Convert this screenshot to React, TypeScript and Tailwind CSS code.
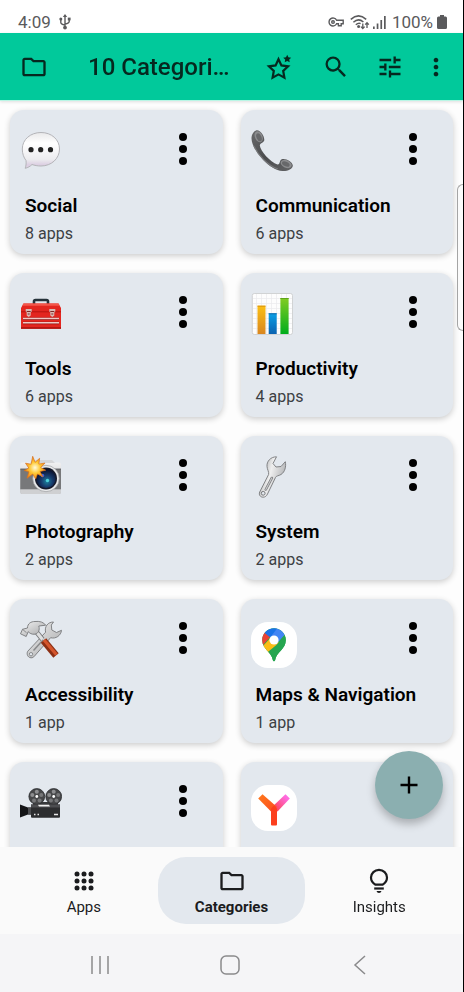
import type { ReactNode } from "react";
import { MdMoreVert, MdOutlineFolder, MdSearch, MdTune } from "react-icons/md";

type Category = {
  name: string;
  apps: number;
  icon: ReactNode;
};

const CATEGORIES: Category[] = [
  { name: "Social", apps: 8, icon: <SpeechIcon /> },
  { name: "Communication", apps: 6, icon: <PhoneIcon /> },
  { name: "Tools", apps: 6, icon: <ToolboxIcon /> },
  { name: "Productivity", apps: 4, icon: <ChartIcon /> },
  { name: "Photography", apps: 2, icon: <CameraIcon /> },
  { name: "System", apps: 2, icon: <WrenchIcon /> },
  { name: "Accessibility", apps: 1, icon: <HammerWrenchIcon /> },
  { name: "Maps & Navigation", apps: 1, icon: <MapsIcon /> },
  { name: "Video", apps: 1, icon: <ProjectorIcon /> },
  { name: "Browser", apps: 1, icon: <YandexIcon /> },
];

export default function App() {
  return (
    <div className="flex h-screen flex-col border-r border-black bg-white font-['Roboto',sans-serif] text-black">
      <StatusBar />
      <Header />

      <div className="relative flex min-h-0 flex-1 flex-col">
        <main className="grid min-h-0 flex-1 auto-rows-max grid-cols-2 gap-x-[18px] gap-y-[19px] overflow-y-auto bg-[#fdfdfd] px-[10px] pt-[9px] pb-6 [scrollbar-width:none]">
          {CATEGORIES.map((c) => (
            <CategoryCard key={c.name} category={c} />
          ))}
        </main>

        {/* edge panel handle */}
        <div className="absolute top-[83px] right-0 h-[147px] w-[6px] rounded-l-md border border-r-0 border-[#a5a5a5] bg-[#fbfbfb]" />

        <button
          aria-label="Add category"
          className="absolute right-5 bottom-7 flex size-[68px] items-center justify-center rounded-full bg-[#8bafb0] shadow-[0_5px_8px_rgba(0,0,0,0.25)]"
        >
          <svg viewBox="0 0 18 18" className="size-[18px]" stroke="#000" strokeWidth="2.4">
            <path d="M9 0.5v17M0.5 9h17" />
          </svg>
        </button>
      </div>

      <BottomNav />
      <SystemNav />
    </div>
  );
}

function StatusBar() {
  return (
    <div className="flex h-[33px] items-end justify-between bg-white pr-4 pl-[18px] text-[17px] leading-[22px] text-[#5a5a5c]">
      <div className="flex items-center gap-2">
        <span>4:09</span>
        <svg viewBox="0 0 12 16" className="h-4 w-3" fill="none" stroke="#5a5a5c" strokeWidth="1.4">
          <path d="M6 2v11M1.8 6v2.4Q1.8 10 6 11M10.2 6v1.6Q10.2 9.4 6 10" />
          <path d="M6 0l2.2 3H3.8z" fill="#5a5a5c" stroke="none" />
          <circle cx="1.8" cy="5" r="1.5" fill="#5a5a5c" stroke="none" />
          <path d="M8.8 3.6h2.8v2.8H8.8z" fill="#5a5a5c" stroke="none" />
          <circle cx="6" cy="13.6" r="1.9" fill="#5a5a5c" stroke="none" />
        </svg>
      </div>
      <div className="flex items-center">
        <svg viewBox="0 0 16 12" className="mr-[6px] h-3 w-4" fill="none" stroke="#5a5a5c" strokeWidth="1.4">
          <path d="M8.6 4.2A4 4 0 1 0 8.6 7.8H10.4V9.8H13.2V7.8H15.2V4.2z" />
          <circle cx="5" cy="6" r="1.3" />
        </svg>
        <svg viewBox="0 0 20 16" className="mr-[3px] h-4 w-5" fill="none" stroke="#5a5a5c" strokeWidth="1.5">
          <path d="M0.8 5.4Q8.5 -1.6 16.2 5.4M3.4 8.2Q8.5 3.6 13.4 8M5.8 10.8Q8.5 8.4 10.6 9.6" />
          <circle cx="8.6" cy="12.6" r="1.5" fill="#5a5a5c" stroke="none" />
          <path d="M12.8 9.4v5M11 12.6l1.8 2 1.8-2M17 14V8.6M15.2 10.6l1.8-2 1.8 2" strokeWidth="1.3" />
        </svg>
        <svg viewBox="0 0 13 13" className="mr-[6px] size-[13px]" fill="#5a5a5c">
          <path d="M0 10.5h1.7V13H0zM3.7 7.5h1.7V13H3.7zM7.4 4h1.7v9H7.4zM11 0h1.7v13H11z" />
        </svg>
        <span className="mr-1">100%</span>
        <svg viewBox="0 0 10 14" className="h-[14px] w-[10px]" fill="#5a5a5c">
          <path d="M3 0h4v1.5h1.6Q10 1.5 10 3v9.5Q10 14 8.5 14h-7Q0 14 0 12.500V3Q0 1.500 1.500 1.500H3z" />
        </svg>
      </div>
    </div>
  );
}

function Header() {
  return (
    <header className="z-10 flex h-[68px] items-center border-b border-[#b9f6e5] bg-[#01c99b] pr-[13px] pl-5 text-[#06281f] shadow-[0_1px_3px_rgba(0,0,0,0.12)]">
      <button aria-label="Folders" className="shrink-0">
        <MdOutlineFolder size={28} />
      </button>
      <h1 className="ml-10 min-w-0 flex-1 truncate text-2xl font-medium">10 Categories</h1>
      <button aria-label="Favourites" className="ml-[31px] shrink-0">
        <svg viewBox="0 0 28 28" className="size-7">
          <path
            d="M12.500 6.200l2.900 6.200 6.700 0.900-4.900 4.700 1.200 6.700-5.900-3.300-5.900 3.300 1.200-6.700-4.900-4.700 6.700-0.900z"
            fill="none"
            stroke="currentColor"
            strokeWidth="2.200"
          />
          <path
            d="M21.200 1.800l1.200 2.500 2.800 0.400-2 1.900 0.500 2.700-2.500-1.300-2.500 1.300 0.500-2.700-2-1.900 2.800-0.400z"
            fill="currentColor"
          />
        </svg>
      </button>
      <button aria-label="Search" className="ml-[28px] shrink-0">
        <MdSearch size={28} />
      </button>
      <button aria-label="Filter" className="ml-[26px] shrink-0">
        <MdTune size={28} />
      </button>
      <button aria-label="More options" className="ml-[18px] shrink-0">
        <MdMoreVert size={28} />
      </button>
    </header>
  );
}

function CategoryCard({ category }: { category: Category }) {
  const { name, apps, icon } = category;
  return (
    <section className="rounded-[14px] bg-[#e3e8ee] pt-5 pb-2 shadow-[0_2px_6px_rgba(0,0,0,0.2)]">
      <div className="flex h-16 items-start justify-between pr-7 pl-[10px]">
        {icon}
        <button aria-label={`${name} options`} className="flex h-[38px] w-6 items-center justify-center">
          <svg viewBox="0 0 8 32" className="h-8 w-2">
            <circle cx="4" cy="4" r="4" />
            <circle cx="4" cy="16" r="4" />
            <circle cx="4" cy="28" r="4" />
          </svg>
        </button>
      </div>
      <div className="flex flex-col gap-1 px-[15px]">
        <h2 className="truncate text-[19px] leading-6 font-semibold">{name}</h2>
        <p className="text-base leading-6 text-[#3c4043]">
          {apps} {apps === 1 ? "app" : "apps"}
        </p>
      </div>
    </section>
  );
}

function BottomNav() {
  return (
    <nav className="z-10 flex bg-[#fafafa] p-[10px] text-[#1b1c1e]">
      <NavItem label="Apps">
        <svg viewBox="0 0 28 28" className="size-7" fill="currentColor">
          {[7, 14, 21].map((y) => [7, 14, 21].map((x) => <circle key={`${x}-${y}`} cx={x} cy={y} r="2.500" />))}
        </svg>
      </NavItem>
      <NavItem label="Categories" active>
        <MdOutlineFolder size={28} />
      </NavItem>
      <NavItem label="Insights">
        <svg viewBox="0 0 28 28" className="size-7" fill="none" stroke="currentColor" strokeWidth="2.200">
          <path d="M10.500 17.700C7.800 16.300 6 13.700 6 10.600 6 6.200 9.600 2.900 14 2.900S22 6.200 22 10.600C22 13.700 20.200 16.300 17.500 17.700z" />
          <path d="M9.200 21.500h9.600" />
          <path d="M11.500 24h5Q16 26 14 26T11.500 24z" fill="currentColor" stroke="none" />
        </svg>
      </NavItem>
    </nav>
  );
}

function NavItem({ label, active, children }: { label: string; active?: boolean; children: ReactNode }) {
  return (
    <button
      className={`flex flex-1 basis-0 flex-col items-center gap-[2px] rounded-[28px] pt-[10px] pb-[7px] text-[15px] leading-5 ${active ? "bg-[#e3e8ee] font-bold" : ""}`}
    >
      {children}
      <span>{label}</span>
    </button>
  );
}

function SystemNav() {
  return (
    <div className="flex h-[58px] items-center bg-[#f5f5f7] pt-1 pr-[38px] pl-[35px]">
      <button aria-label="Recents" className="flex flex-1 justify-center">
        <svg viewBox="0 0 20 20" className="size-5" stroke="#8a8a8c" strokeWidth="1.500">
          <path d="M2 1v18M10 1v18M18 1v18" />
        </svg>
      </button>
      <button aria-label="Home" className="flex flex-1 justify-center">
        <svg viewBox="0 0 20 20" className="size-5" fill="none" stroke="#8a8a8c" strokeWidth="1.500">
          <rect x="1" y="1" width="18" height="18" rx="5" />
        </svg>
      </button>
      <button aria-label="Back" className="flex flex-1 justify-center">
        <svg viewBox="0 0 20 20" className="size-5" fill="none" stroke="#8a8a8c" strokeWidth="1.500">
          <path d="M15 1L5 10l10 9" />
        </svg>
      </button>
    </div>
  );
}

function SpeechIcon() {
  return (
    <svg viewBox="0 0 42 42" className="size-[42px]">
      <defs>
        <linearGradient id="speech" x1="0" y1="0" x2="0" y2="1">
          <stop offset="0" stopColor="#e9e9ea" />
          <stop offset="0.3" stopColor="#fff" />
          <stop offset="0.75" stopColor="#ececef" />
          <stop offset="0.9" stopColor="#dccfe2" />
        </linearGradient>
      </defs>
      <path
        d="M21 2.500C31.500 2.500 39.500 9.500 39.500 19S31.500 36 21 36C17.500 36 14.500 35.400 12 34.500 10 36.500 8 37.600 5.200 38.300 6.200 35.500 6.300 32.500 6 30.500 3.700 27.500 2.300 23.500 2.300 19 2.300 9.500 10.500 2.500 21 2.500z"
        fill="url(#speech)"
        stroke="#b4b4b8"
        strokeWidth="1"
      />
      <circle cx="11" cy="19.700" r="2.600" fill="#222" />
      <circle cx="20.700" cy="19.700" r="2.600" fill="#222" />
      <circle cx="30.500" cy="19.700" r="2.600" fill="#222" />
    </svg>
  );
}

function PhoneIcon() {
  return (
    <svg viewBox="0 0 42 42" className="size-[42px]">
      <defs>
        <linearGradient id="handset" x1="0" y1="0" x2="1" y2="1">
          <stop offset="0" stopColor="#6a6b6d" />
          <stop offset="0.5" stopColor="#4b4c4e" />
          <stop offset="1" stopColor="#636466" />
        </linearGradient>
      </defs>
      <path
        d="M0.500 8.500C0.500 4 3.200 0.200 6.200 0.200 9.500 0.200 13.500 6 13.300 10 13.100 12.800 9.300 12.500 8.800 15.500 9.500 21 19 32 26.500 34.500 29.500 34.800 28 30.500 30.800 29.300 34.500 27.900 41.500 32 41.800 35.300 42 39 36.500 41.300 31.500 41 25 40.800 18 36 12 29.500 5.500 22.500 0.500 14.500 0.500 8.500z"
        fill="url(#handset)"
      />
      <ellipse cx="7.700" cy="6.700" rx="3.800" ry="5.800" transform="rotate(-24 7.700 6.700)" fill="#8b8c8e" />
      <ellipse cx="8" cy="7.300" rx="2.400" ry="4.200" transform="rotate(-24 8 7.300)" fill="#67686a" />
      <ellipse cx="35.200" cy="34" rx="5.800" ry="3.700" transform="rotate(24 35.200 34)" fill="#8b8c8e" />
      <ellipse cx="34.800" cy="34" rx="4" ry="2.300" transform="rotate(24 34.800 34)" fill="#67686a" />
      <path d="M3 16C7 25 17 36 27 39" fill="none" stroke="#77787a" strokeWidth="1.200" />
    </svg>
  );
}

function ToolboxIcon() {
  return (
    <svg viewBox="0 0 42 42" className="size-[42px]">
      <path d="M14 12V8.500Q14 7 15.500 7h11Q28 7 28 8.500V12" fill="none" stroke="#26323a" strokeWidth="2.600" />
      <path d="M3.500 10.500h35L41 15v20.700H1V15z" fill="#e3261f" />
      <path d="M3.500 10.500h35l1.300 2.300H2.200z" fill="#f4574b" />
      <path d="M1 18.800h40" stroke="#b5140f" strokeWidth="1" />
      <path d="M1 35h40" stroke="#a8120e" strokeWidth="1.400" />
      <path d="M3 25.800h36M3 30h36" stroke="#8f1512" strokeWidth="2.400" />
      <path d="M3 25.500h36M3 29.700h36" stroke="#f0c9c5" strokeWidth="1.400" />
      {[8.700, 32.300].map((x) => (
        <g key={x} transform={`translate(${x} 15)`}>
          <path d="M-3 1h6v2.600l-1 1v3L0 9l-2-1.400v-3l-1-1z" fill="#d8b9b4" />
          <path d="M-2 3.500h4M-1 6h2" stroke="#7d2a26" strokeWidth="1" />
        </g>
      ))}
    </svg>
  );
}

function ChartIcon() {
  return (
    <svg viewBox="0 0 42 42" className="size-[42px]">
      <defs>
        <linearGradient id="barOrange" x1="0" y1="0" x2="0" y2="1">
          <stop offset="0" stopColor="#fbbf14" />
          <stop offset="1" stopColor="#d9861f" />
        </linearGradient>
        <linearGradient id="barBlue" x1="0" y1="0" x2="0" y2="1">
          <stop offset="0" stopColor="#0aa0e6" />
          <stop offset="1" stopColor="#0b62b0" />
        </linearGradient>
        <linearGradient id="barGreen" x1="0" y1="0" x2="0" y2="1">
          <stop offset="0" stopColor="#82cc23" />
          <stop offset="1" stopColor="#00ad1d" />
        </linearGradient>
      </defs>
      <rect x="1.300" y="0.500" width="40.200" height="41" rx="2" fill="#fdfdfd" stroke="#c9cacc" strokeWidth="0.800" />
      <path
        d="M2 5.500h39M2 10.500h39M2 15.500h39M2 20.500h39M2 25.500h39M2 30.500h39M2 35.500h39M5.500 1v40M10.500 1v40M15.500 1v40M20.500 1v40M25.500 1v40M30.500 1v40M35.500 1v40"
        stroke="#e9eaec"
        strokeWidth="0.700"
      />
      <rect x="6.500" y="12.700" width="8" height="28.300" fill="url(#barOrange)" />
      <rect x="17.700" y="20.300" width="8" height="20.700" fill="url(#barBlue)" />
      <rect x="29.400" y="5" width="8.200" height="36" fill="url(#barGreen)" />
      <path d="M6.500 13.200h8" stroke="#d9920c" />
      <path d="M17.700 20.800h8" stroke="#1269a8" />
      <path d="M29.400 5.500h8.200" stroke="#5fa31a" />
    </svg>
  );
}

function CameraIcon() {
  return (
    <svg viewBox="0 0 42 42" className="size-[42px]">
      <defs>
        <linearGradient id="cameraTop" x1="0" y1="0" x2="0" y2="1">
          <stop offset="0" stopColor="#f1f1f2" />
          <stop offset="1" stopColor="#b3b4b6" />
        </linearGradient>
        <radialGradient id="cameraLens" cx="0.55" cy="0.65" r="0.6">
          <stop offset="0" stopColor="#1d83a0" />
          <stop offset="0.5" stopColor="#173a6b" />
          <stop offset="1" stopColor="#0a1230" />
        </radialGradient>
        <radialGradient id="cameraFlash">
          <stop offset="0" stopColor="#fffbe0" />
          <stop offset="0.5" stopColor="#ffc933" />
          <stop offset="1" stopColor="#f0891d" />
        </radialGradient>
      </defs>
      <rect x="0.300" y="6.500" width="40.700" height="31.500" rx="2" fill="url(#cameraTop)" />
      <path d="M10 7l3-3h19l3 3z" fill="#d5d6d8" />
      <path d="M0.300 13h40.700v20.500H0.300z" fill="#77787a" />
      <path d="M0.300 13h40.700" stroke="#55575a" strokeWidth="0.800" />
      <path d="M0.300 33.500h40.700V36q0 2-2 2H2.300q-2 0-2-2z" fill="#cfd0d2" />
      <circle cx="26" cy="22.500" r="13.200" fill="#e8e9ea" stroke="#9c9da0" strokeWidth="0.700" />
      <circle cx="26" cy="22.500" r="11" fill="#161a2b" />
      <circle cx="26" cy="22.500" r="9.600" fill="url(#cameraLens)" />
      <circle cx="22.500" cy="19.500" r="1.700" fill="#4a63d8" />
      <circle cx="27.500" cy="24.500" r="1.700" fill="#4fd0d8" />
      <path
        d="M12.700 0.300l2.400 6 4.500-4-0.800 5.700 6.200-0.900-4.300 4.400 5 2.700-5.700 1.300 2.800 5.300-5.300-2.800-1.900 5-2.800-5-5.800 4.200 1.900-6.400-4.600-1.300 4.500-2.500-3.300-4.800 5.600 1z"
        fill="url(#cameraFlash)"
        stroke="#d9701a"
        strokeWidth="0.700"
      />
    </svg>
  );
}

function WrenchIcon() {
  return (
    <svg viewBox="0 0 42 42" className="size-[42px]">
      <defs>
        <linearGradient id="wrench" x1="0" y1="0" x2="1" y2="0.4">
          <stop offset="0" stopColor="#8d8e90" />
          <stop offset="0.5" stopColor="#efefef" />
          <stop offset="1" stopColor="#b3b4b6" />
        </linearGradient>
      </defs>
      <path
        d="M25.500 0.800C19.500 0.800 15.500 5.500 16 10.500 16.200 13.500 18.200 16 17.600 18.500L8.700 36C7.500 39 9.500 41.200 12 41.200 14.200 41.200 15.600 40 16.500 38L24.500 21.500C25.500 19.500 27.500 20 30 18.500 34 16 35.300 10.500 34.300 5.700L30 10.500 25 11 22 7.500z"
        fill="url(#wrench)"
        stroke="#77787a"
        strokeWidth="0.900"
        strokeLinejoin="round"
      />
      <path d="M20.800 22L14.800 33.500" stroke="#77787a" strokeWidth="2.600" strokeLinecap="round" />
      <path d="M20.800 22L14.800 33.500" stroke="#c6c7c9" strokeWidth="1.200" strokeLinecap="round" />
      <circle cx="12.200" cy="37.300" r="1.900" fill="#e3e8ee" stroke="#6d6e70" strokeWidth="0.900" />
    </svg>
  );
}

function HammerWrenchIcon() {
  return (
    <svg viewBox="0 0 42 42" className="size-[42px]">
      <defs>
        <linearGradient id="steel" x1="0" y1="0" x2="1" y2="1">
          <stop offset="0" stopColor="#f5f5f5" />
          <stop offset="1" stopColor="#a2a3a5" />
        </linearGradient>
      </defs>
      <path
        d="M33.500 3C28 3 24.300 7.500 25.600 13.200L7.800 32.200C6.300 34.500 7.400 38.500 11 38.800 12.600 38.900 13.500 38.200 14.400 37.200L30.600 18.700C35.800 20.200 41 16.500 41.500 11.300L36.500 13.500 31.800 11 31.300 6z"
        fill="url(#steel)"
        stroke="#77787a"
        strokeWidth="0.900"
        strokeLinejoin="round"
      />
      <path d="M23 21L13.500 31.500" stroke="#88898b" strokeWidth="1.500" />
      <circle cx="11" cy="35.200" r="1.700" fill="#e3e8ee" stroke="#77787a" strokeWidth="0.800" />
      <path d="M15 11L22.500 20.500" stroke="#77787a" strokeWidth="5" />
      <path d="M15 11L22.500 20.500" stroke="#dedfe0" strokeWidth="3.200" />
      <path
        d="M7.500 9C7.500 4.500 11 2.500 15 2.500 19.500 2 23.500 3 25.700 6.200L18.800 7C20 11 18.500 14.300 15 15.200 11.500 15.700 9.700 14 8.200 12.700L6.200 17.500 0.500 14.800 2.500 10.300z"
        fill="url(#steel)"
        stroke="#77787a"
        strokeWidth="0.900"
        strokeLinejoin="round"
      />
      <path d="M2.500 10.300L6.500 13.700" stroke="#77787a" strokeWidth="0.800" />
      <path d="M23.500 21.500L36 36.500" stroke="#8c2f14" strokeWidth="7" />
      <path d="M24 21L36.500 35.700" stroke="#d4552c" strokeWidth="3.200" />
    </svg>
  );
}

function ProjectorIcon() {
  return (
    <svg viewBox="0 0 42 42" className="size-[42px]">
      <path d="M13 20h25v3H13z" fill="#38393b" />
      {[16.800, 33.700].map((x) => (
        <g key={x} transform={`translate(${x} 14.500)`}>
          <circle r="7.900" fill="#47484a" stroke="#2a2b2d" strokeWidth="0.800" />
          <circle cx="0" cy="-4.700" r="2" fill="#8d8e90" />
          <circle cx="4.500" cy="-1.400" r="2" fill="#77787a" />
          <circle cx="2.800" cy="3.900" r="2" fill="#77787a" />
          <circle cx="-2.800" cy="3.900" r="2" fill="#77787a" />
          <circle cx="-4.500" cy="-1.400" r="2" fill="#8d8e90" />
          <circle r="1.400" fill="#fff" />
        </g>
      ))}
      <path d="M11 22.500h29v12.200q0 1-1 1H12q-1 0-1-1z" fill="#2c2d2f" />
      <path d="M11 22.500h29v3H11z" fill="#4c4d50" />
      <path d="M18 22.800h11l1 1.800H19z" fill="#f1f1f1" />
      <path d="M0 22.500l8 3h3v7H8l-8 3z" fill="#141517" />
      <path d="M8 25.500h3v7H8z" fill="#4c4d50" />
      <path d="M14 32.500h1.500M17.500 32.500H19M34 32.500h4" stroke="#e6e6e6" strokeWidth="1.300" />
    </svg>
  );
}

function AppTile({ children }: { children: ReactNode }) {
  return (
    <div className="mt-[3px] size-[46px] rounded-[17px] bg-white">
      <svg viewBox="0 0 46 46" className="size-full">
        {children}
      </svg>
    </div>
  );
}

function MapsIcon() {
  return (
    <AppTile>
      <defs>
        <clipPath id="pin">
          <path d="M23 6.300C29.600 6.300 34.800 11.500 34.800 18 34.800 27.500 25.500 29.500 24.100 38.300 23.800 39.500 22.200 39.500 21.900 38.300 20.500 29.500 11.200 27.500 11.200 18 11.200 11.500 16.400 6.300 23 6.300z" />
        </clipPath>
      </defs>
      <g clipPath="url(#pin)">
        <path d="M0 0h46v46H0z" fill="#26a650" />
        <path d="M12 24L23 12 28 21 15.500 34.500 8 30z" fill="#fbbc15" />
        <path d="M11 24.200L19.500 14.500 13.500 9.500 6 14v9z" fill="#ea4335" />
        <path d="M13 10.500L20 16 27.500 6.500 22 3z" fill="#1a73e8" />
        <path d="M26.500 6L19.500 15 25 22.500 34.500 12 38 6z" fill="#4285f4" />
        <path d="M26 22.500L34 12.500 38 16 32 34 24 42 15 31.500z" fill="#26a650" />
      </g>
      <circle cx="23" cy="18" r="4.600" fill="#fff" />
    </AppTile>
  );
}

function YandexIcon() {
  return (
    <AppTile>
      <defs>
        <linearGradient id="armLeft" x1="0" y1="0" x2="1" y2="1">
          <stop offset="0" stopColor="#ff7a1a" />
          <stop offset="1" stopColor="#fb4a22" />
        </linearGradient>
        <linearGradient id="armRight" x1="1" y1="0" x2="0" y2="1">
          <stop offset="0.2" stopColor="#ff6be0" />
          <stop offset="1" stopColor="#fb3a3a" />
        </linearGradient>
      </defs>
      <path d="M34.500 9.200L38.800 13.500 26.500 26.500 21 22z" fill="url(#armRight)" />
      <path d="M11.500 9.200L7.200 13.500 20 26.500 26 22z" fill="url(#armLeft)" />
      <path d="M20 23.500L23 20.500 26 23.500V39.500Q26 40.500 25 40.500H21Q20 40.500 20 39.500z" fill="#fc3f1d" />
    </AppTile>
  );
}
